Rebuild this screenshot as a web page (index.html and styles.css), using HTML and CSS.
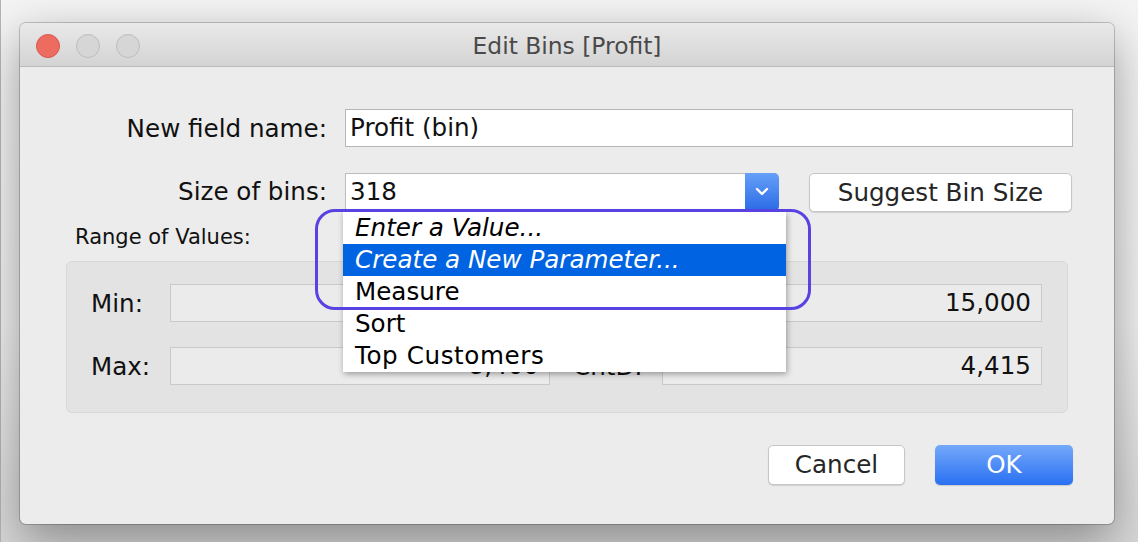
FILE: index.html
```html
<!DOCTYPE html>
<html>
<head>
<meta charset="utf-8">
<title>Edit Bins [Profit]</title>
<link rel="stylesheet" href="styles.css">
</head>
<body>
<div class="window">
  <div class="titlebar">
    <div class="lights">
      <span class="light close"></span>
      <span class="light"></span>
      <span class="light"></span>
    </div>
    <div class="title">Edit Bins [Profit]</div>
    <div class="spacer"></div>
  </div>
  <div class="content">
    <div class="row">
      <span class="lbl">New field name:</span>
      <div class="input name">Profit (bin)</div>
    </div>
    <div class="row row-size">
      <span class="lbl">Size of bins:</span>
      <div class="combo">
        <span class="combo-val">318</span>
        <span class="combo-btn"><svg width="14" height="9" viewBox="0 0 14 9"><path d="M2 2 L7 7 L12 2" fill="none" stroke="#fff" stroke-width="2.4" stroke-linecap="round" stroke-linejoin="round"/></svg></span>
      </div>
      <div class="btn suggest">Suggest Bin Size</div>
    </div>
    <div class="range-label">Range of Values:</div>
    <div class="group">
      <div class="grow">
        <span class="glbl">Min:</span>
        <div class="gfield">-6,600</div>
        <span class="glbl2">Diff:</span>
        <div class="gfield">15,000</div>
      </div>
      <div class="grow">
        <span class="glbl">Max:</span>
        <div class="gfield">8,400</div>
        <span class="glbl2">CntD:</span>
        <div class="gfield">4,415</div>
      </div>
    </div>
    <div class="actions">
      <div class="btn cancel">Cancel</div>
      <div class="btn ok">OK</div>
    </div>
  </div>
  <ul class="menu">
    <li class="item it">Enter a Value...</li>
    <li class="item it sel">Create a New Parameter...</li>
    <li class="item">Measure</li>
    <li class="item">Sort</li>
    <li class="item wide">Top Customers</li>
  </ul>
  <div class="ring"></div>
</div>
</body>
</html>
```

FILE: styles.css
```css
* { box-sizing: border-box; }
html, body {
  margin: 0;
  width: 1138px;
  height: 542px;
  overflow: hidden;
}
body {
  padding: 23px 0 0 20px;
  background: linear-gradient(#f4f4f4, #f0f0f0 60%, #d8d8d8);
  box-shadow: inset 1px 0 0 #b5b5b5;
  font-family: "DejaVu Sans", "Liberation Sans", sans-serif;
  color: #111;
}
.window {
  position: relative;
  width: 1094px;
  height: 501px;
  border-radius: 6px;
  background: #ececec;
  box-shadow: 0 0 0 1px rgba(0,0,0,0.2), 0 16px 48px rgba(0,0,0,0.38);
}
.titlebar {
  height: 44px;
  display: grid;
  grid-template-columns: 1fr auto 1fr;
  align-items: center;
  background: linear-gradient(#e9e9e9, #d4d4d4);
  border-bottom: 1px solid #b9b9b9;
  border-radius: 6px 6px 0 0;
  padding-top: 2px;
}
.lights {
  display: flex;
  gap: 16px;
  padding-left: 16px;
}
.light {
  width: 24px;
  height: 24px;
  border-radius: 50%;
  background: #d6d6d6;
  border: 1px solid #bcbcbc;
}
.light.close {
  background: #ee6b60;
  border-color: #d9574d;
}
.title {
  font-size: 23.4px;
  color: #4a4a4a;
}
.content {
  padding: 42px 41px 0 0;
}
.row {
  display: flex;
  align-items: center;
}
.lbl {
  width: 307px;
  margin-right: 18px;
  text-align: right;
  font-size: 24.6px;
  color: #111;
}
.input {
  height: 38px;
  background: #fff;
  border: 1px solid #b7b7b7;
  font-size: 24.6px;
  line-height: 36px;
  padding-left: 4px;
}
.input.name { width: 728px; }
.row-size { margin-top: 24px; }
.combo {
  width: 434px;
  height: 38px;
  display: flex;
  background: #fff;
  border: 1px solid #bdbdbd;
  border-right: none;
  border-radius: 0 5px 5px 0;
  box-shadow: 0 1px 1px rgba(0,0,0,0.08);
}
.combo-val {
  flex: 1;
  font-size: 24.6px;
  line-height: 36px;
  padding-left: 4px;
}
.combo-btn {
  width: 34px;
  margin: -1px 0;
  border-radius: 0 5px 5px 0;
  background: linear-gradient(#66a0f8, #2a6be6);
  display: flex;
  align-items: center;
  justify-content: center;
}
.btn {
  height: 39px;
  border-radius: 5px;
  font-size: 24.6px;
  text-align: center;
  line-height: 37px;
  color: #262626;
  background: #fff;
  border: 1px solid #c6c6c6;
  box-shadow: 0 1px 1px rgba(0,0,0,0.12);
}
.suggest {
  width: 263px;
  margin-left: 30px;
  margin-top: 2px;
}
.range-label {
  font-size: 21px;
  margin: 12px 0 0 55px;
  line-height: 26px;
  color: #111;
}
.group {
  margin: 11px 0 0 46px;
  width: 1002px;
  height: 152px;
  background: #e3e3e3;
  border: 1px solid #d8d8d8;
  border-radius: 6px;
  padding: 22px 24px 0 24px;
  display: flex;
  flex-direction: column;
  gap: 25px;
}
.grow {
  display: flex;
  align-items: center;
  font-size: 24.6px;
}
.glbl { width: 79px; }
.glbl2 { width: 112px; padding-left: 23px; }
.gfield {
  width: 380px;
  height: 38px;
  background: #ebebeb;
  border: 1px solid #c9c9c9;
  text-align: right;
  padding-right: 10px;
  line-height: 36px;
}
.actions {
  display: flex;
  justify-content: flex-end;
  gap: 30px;
  margin-top: 32px;
}
.cancel { width: 137px; height: 40px; line-height: 38px; }
.ok {
  width: 138px;
  height: 40px;
  line-height: 40px;
  border: none;
  color: #fff;
  background: linear-gradient(#74a9fa, #2970f2);
  box-shadow: 0 1px 1px rgba(0,0,0,0.15);
}
.menu {
  position: absolute;
  left: 323px;
  top: 189px;
  width: 443px;
  margin: 0;
  padding: 0;
  list-style: none;
  background: #fff;
  box-shadow: 1px 2px 6px rgba(0,0,0,0.35);
}
.item {
  height: 32px;
  line-height: 32px;
  padding-left: 12px;
  font-size: 24.6px;
  color: #000;
}
.item.it { font-style: italic; }
.item.wide { letter-spacing: 0.6px; }
.item.sel {
  background: #0063e1;
  color: #fff;
}
.ring {
  position: absolute;
  left: 295px;
  top: 186px;
  width: 496px;
  height: 101px;
  border: 3px solid #5843e2;
  border-radius: 20px;
}
```
